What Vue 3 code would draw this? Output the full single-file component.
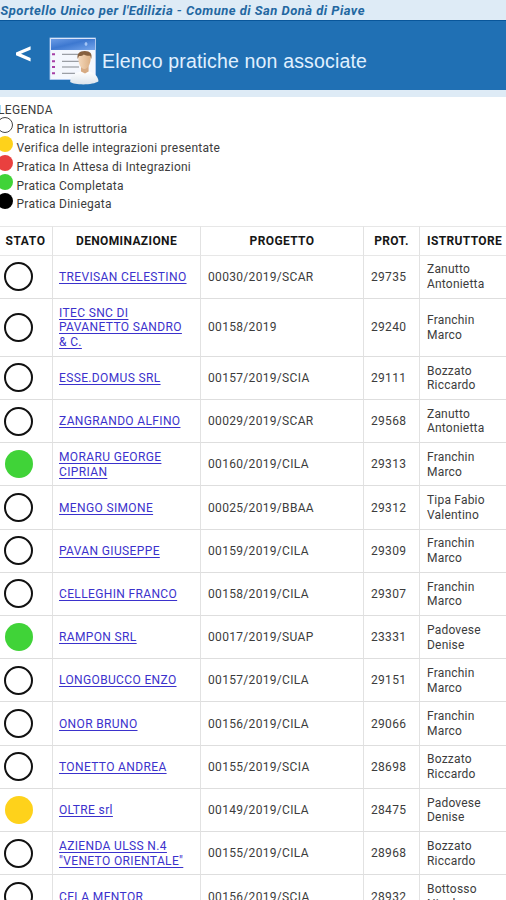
<script setup>
const legend = [
  ['open', 'Pratica In istruttoria'],
  ['yellow', 'Verifica delle integrazioni presentate'],
  ['red', 'Pratica In Attesa di Integrazioni'],
  ['green', 'Pratica Completata'],
  ['black', 'Pratica Diniegata'],
]
const headers = ['STATO', 'DENOMINAZIONE', 'PROGETTO', 'PROT.', 'ISTRUTTORE']
const rows = [
  ['open', ['TREVISAN CELESTINO'], '00030/2019/SCAR', '29735', ['Zanutto', 'Antonietta']],
  ['open', ['ITEC SNC DI', 'PAVANETTO SANDRO', '& C.'], '00158/2019', '29240', ['Franchin', 'Marco']],
  ['open', ['ESSE.DOMUS SRL'], '00157/2019/SCIA', '29111', ['Bozzato', 'Riccardo']],
  ['open', ['ZANGRANDO ALFINO'], '00029/2019/SCAR', '29568', ['Zanutto', 'Antonietta']],
  ['green', ['MORARU GEORGE', 'CIPRIAN'], '00160/2019/CILA', '29313', ['Franchin', 'Marco']],
  ['open', ['MENGO SIMONE'], '00025/2019/BBAA', '29312', ['Tipa Fabio', 'Valentino']],
  ['open', ['PAVAN GIUSEPPE'], '00159/2019/CILA', '29309', ['Franchin', 'Marco']],
  ['open', ['CELLEGHIN FRANCO'], '00158/2019/CILA', '29307', ['Franchin', 'Marco']],
  ['green', ['RAMPON SRL'], '00017/2019/SUAP', '23331', ['Padovese', 'Denise']],
  ['open', ['LONGOBUCCO ENZO'], '00157/2019/CILA', '29151', ['Franchin', 'Marco']],
  ['open', ['ONOR BRUNO'], '00156/2019/CILA', '29066', ['Franchin', 'Marco']],
  ['open', ['TONETTO ANDREA'], '00155/2019/SCIA', '28698', ['Bozzato', 'Riccardo']],
  ['yellow', ['OLTRE srl'], '00149/2019/CILA', '28475', ['Padovese', 'Denise']],
  ['open', ['AZIENDA ULSS N.4', '"VENETO ORIENTALE"'], '00155/2019/CILA', '28968', ['Bozzato', 'Riccardo']],
  ['open', ['CELA MENTOR'], '00156/2019/SCIA', '28932', ['Bottosso', 'Nicola']],
]
</script>

<template>
  <div class="page">
    <div class="topline">Sportello Unico per l'Edilizia - Comune di San Donà di Piave</div>
    <header class="bar">
      <svg class="back" width="16" height="18" viewBox="0 0 16 18"><path d="M15.6 1.2v3.5L6 8.8l9.6 4.1v3.5L1 10.2V7.4Z" fill="#fff" /></svg>
      <svg class="logo" width="50" height="48" viewBox="0 0 50 48">
        <defs>
          <linearGradient id="top" x1="0" y1="0" x2="1" y2="1">
            <stop offset="0" stop-color="#6b9ce6" /><stop offset=".45" stop-color="#3d78d0" /><stop offset="1" stop-color="#76a6ec" />
          </linearGradient>
          <linearGradient id="coat" x1="0" y1="0" x2="0" y2="1">
            <stop offset="0" stop-color="#fff" /><stop offset="1" stop-color="#dce4ec" />
          </linearGradient>
          <linearGradient id="face" x1="0" y1="0" x2="1" y2="0">
            <stop offset="0" stop-color="#f5d9bc" /><stop offset="1" stop-color="#dcb084" />
          </linearGradient>
        </defs>
        <rect x="1" y="1" width="45.5" height="41.5" fill="#f4f7fd" stroke="#b5cdf2" stroke-width=".8" />
        <rect x="2" y="2" width="44" height="11" fill="url(#top)" />
        <path d="M37 5v4M35.5 7h3" stroke="#bfd9ff" stroke-width="1" />
        <path d="M13 17.3h26M13 24.3h17M13 30h17M13 36.3h13" stroke="#85898f" stroke-width="1" />
        <path d="M3 17.3h3M3 24.3h3M3 30h3M3 36.3h3" stroke="#a73fa5" stroke-width="2" />
        <path d="M21.2 45c0-5 2.5-8.3 10.3-10.5h8.2c6 1.6 9.4 5 9.8 9.8-5 4-24 4-28.3.7Z" fill="url(#coat)" />
        <path d="M32 29v5.6l4 2 3.6-2V29Z" fill="#d7ab83" />
        <path d="M29.2 20c0-3 2.8-5 6.3-5s6.5 2 6.3 5.5c-.2 6.5-2.8 11.5-6.300 11.500-3.700 0-6.300-5-6.300-12Z" fill="url(#face)" />
        <path d="M28.700 22c-1-5 1.300-8 7-8s7.800 2.800 6.500 8l-1-3.200c-2 .2-4.900-.2-6.400-1.300-1.200 1.300-3.200 1.700-4.800 1.500Z" fill="#86603e" />
      </svg>
      <h1>Elenco pratiche non associate</h1>
    </header>
    <section class="legend">
      <div class="legend-title">LEGENDA</div>
      <div v-for="l in legend" :key="l[0]" class="legend-row">
        <i class="dot" :class="l[0]"></i><span>{{ l[1] }}</span>
      </div>
    </section>
    <main class="table">
      <div class="row head"><div v-for="h in headers" :key="h" class="cell"><span>{{ h }}</span></div></div>
      <div v-for="r in rows" :key="r[3]" class="row">
        <div class="cell state"><i class="circle" :class="r[0]"></i></div>
        <div class="cell"><a><template v-for="(n, i) in r[1]" :key="n"><br v-if="i">{{ n }}</template></a></div>
        <div class="cell proj"><span>{{ r[2] }}</span></div>
        <div class="cell prot"><span>{{ r[3] }}</span></div>
        <div class="cell person"><span>{{ r[4][0] }}<br>{{ r[4][1] }}</span></div>
      </div>
    </main>
  </div>
</template>

<style>
body { margin: 0; overflow: hidden; }
</style>

<style scoped>
.page { width: 506px; height: 900px; overflow: hidden; background: #fff; color: #3c3c3c; font: 12px/14.7px Roboto, sans-serif; }
.topline { height: 20px; box-sizing: border-box; background: #deebf6; color: #2367a1; font-size: 13px; line-height: 22px; font-weight: 700; font-style: italic; white-space: nowrap; letter-spacing: .48px; padding-left: .5px; }
.bar { height: 77px; box-sizing: border-box; border-top: 1px solid #09569a; border-bottom: 7px solid #deebf6; background: #2070b4; display: flex; align-items: flex-start; }
.back { margin: 24px 0 0 15px; }
.logo { margin: 16px 0 0 18px; }
h1 { margin: 28px 0 0 3px; color: #e0f0ff; font: 400 19.5px/24px "Liberation Sans", sans-serif; letter-spacing: .17px; white-space: nowrap; }
.legend { height: 129px; box-sizing: border-box; padding-top: 4px; line-height: 18.9px; white-space: nowrap; }
.legend-title { margin-left: -2px; letter-spacing: .35px; }
.legend-row { display: flex; height: 18.9px; letter-spacing: .25px; }
.dot { box-sizing: border-box; width: 16px; height: 16px; border-radius: 50%; flex: none; margin: -2.6px 3.5px 0 -3px; }
.dot.open { border: 1.3px solid #444; }
.yellow { background: #fed21b; }
.red { background: #e9403f; }
.green { background: #40d338; }
.black { background: #000; }
.row { display: grid; grid-template-columns: 53px 148px 163px 56px 86px; min-height: 43.23px; }
.cell { box-sizing: border-box; display: flex; align-items: center; padding: 6.8px 0 6px 6px; border-right: 1px solid #e2e2e2; border-bottom: 1px solid #dedede; white-space: nowrap; }
.cell:last-child { border-right: 0; padding-left: 7px; }
.cell.state { padding: 0 0 0 4px; }
.circle { box-sizing: border-box; width: 29px; height: 29px; border-radius: 50%; }
.circle.open { border: 2px solid #111; }
.circle:not(.open) { width: 28px; height: 28px; margin-left: .5px; }
a { color: #3b32cc; text-decoration: underline; text-underline-offset: 1.5px; letter-spacing: .36px; }
.proj, .prot { letter-spacing: .32px; padding-left: 7px; }
.prot { letter-spacing: .3px; }
.person { letter-spacing: .2px; }
.head { min-height: 29.6px; height: 29.6px; font-weight: 700; color: #161616; letter-spacing: .37px; }
.head .cell { justify-content: center; padding: 1px 0 0 0; border-top: 1px solid #e7e7e7; border-bottom-color: #e7e7e7; }
.head .cell:first-child { letter-spacing: .6px; padding-right: 1px; }
.head .cell:last-child { justify-content: flex-start; padding-left: 7px; }
</style>
